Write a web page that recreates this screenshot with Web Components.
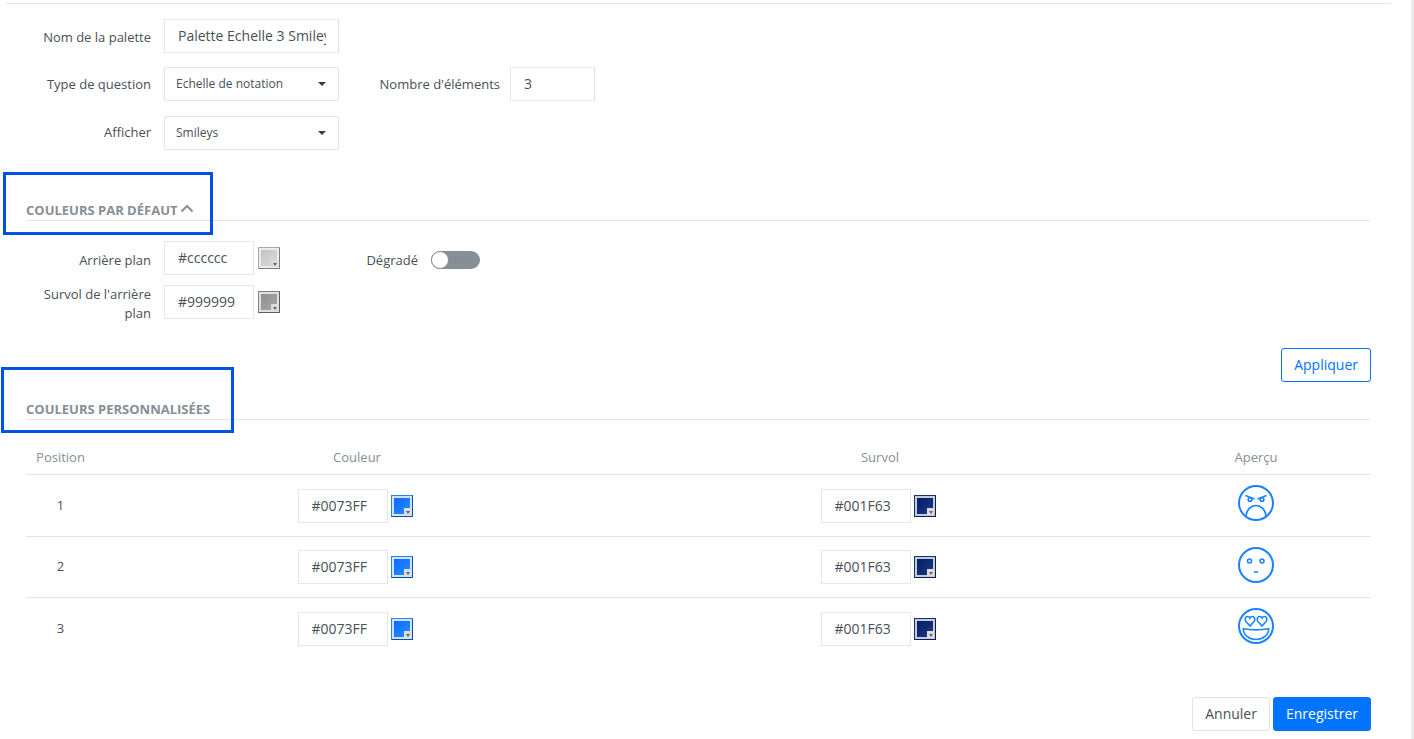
<!DOCTYPE html>
<html lang="fr">
<head>
<meta charset="utf-8">
<title>Palette</title>
<style>
  html, body { margin: 0; padding: 0; background: #fff; overflow: hidden; }
  body { font-family: "Open Sans", sans-serif; color: #495057; }
</style>
</head>
<body>
<palette-form></palette-form>

<script>
function define(name, css, html, init) {
    customElements.define(name, class extends HTMLElement {
        connectedCallback() {
            if (this.shadowRoot) return;
            this.attachShadow({ mode: 'open' });
            const a = (k, d) => this.getAttribute(k) ?? d;
            this.shadowRoot.innerHTML = `<style>${css}</style>${html(a)}`;
            if (init) init(this, a);
        }
    });
}

define('text-box', `
    :host { display: block; box-sizing: border-box; height: 34px; border: 1px solid #e6e6e6;
            background: #fff; font-size: 14px; line-height: 32px; color: #495057; }
    div { margin: 0 12px 0 13px; overflow: hidden; white-space: nowrap; }
`, a => `<div>${a('value', '')}</div>`, (el, a) => { el.style.width = a('width', '90') + 'px'; });

define('select-box', `
    :host { display: flex; align-items: center; justify-content: space-between; box-sizing: border-box;
            width: 175px; height: 34px; padding: 0 12px 0 11px; border: 1px solid #e3e3e3; border-radius: 2px;
            background: #fff; font-size: 12px; color: #495057; }
    span { position: relative; top: -1px; }
    i { width: 0; height: 0; border-left: 4px solid transparent; border-right: 4px solid transparent;
        border-top: 4px solid #343a40; }
`, a => `<span>${a('value', '')}</span><i></i>`);

define('color-swatch', `
    :host { display: block; position: relative; box-sizing: border-box; width: 22px; height: 22px;
            padding: 2px; border: 1px solid var(--edge); border-top-color: var(--edge-lt); border-left-color: var(--edge-lt);
            background: var(--band); }
    .fill { height: 100%; background: linear-gradient(135deg, var(--from), var(--to)); }
    .notch { position: absolute; right: 1px; bottom: 1px; width: 7px; height: 7px; background: #dcdcdc; }
    .notch::after { content: ""; position: absolute; left: 2px; top: 3px; border-left: 2px solid transparent;
            border-right: 2px solid transparent; border-top: 3px solid #666; }
`, () => `<div class="fill"></div><div class="notch"></div>`, (el, a) => {
    el.style.setProperty('--edge', a('edge', '#888'));
    el.style.setProperty('--edge-lt', a('edge-lt', a('edge', '#888')));
    el.style.setProperty('--band', a('band', '#fff'));
    el.style.setProperty('--from', a('from', '#ccc'));
    el.style.setProperty('--to', a('to', '#ccc'));
});

define('color-field', `
    :host { display: flex; align-items: center; gap: var(--swatch-gap, 3px); }
`, a => `<text-box value="${a('value', '')}" width="90"></text-box>
    <color-swatch edge="${a('edge', '#888')}" edge-lt="${a('edge-lt', a('edge', '#888'))}" band="${a('band', '#fff')}" from="${a('from', '#ccc')}" to="${a('to', '#ccc')}"></color-swatch>`);

define('toggle-switch', `
    :host { display: block; position: relative; top: 2px; width: 49px; height: 18px; border-radius: 9px; background: #868e96; }
    i { position: absolute; left: 0; top: 0; box-sizing: border-box; width: 18px; height: 18px; border-radius: 50%;
        background: #fff; border: 1px solid #868e96; }
`, () => `<i></i>`);

// right aligned label followed by its control
define('form-field', `
    :host { display: flex; align-items: center; gap: var(--gap, 13px); }
    label { display: block; box-sizing: border-box; position: relative; top: var(--ly, 0px); text-align: right;
            font-size: 13px; line-height: 19px; color: #495057; }
`, a => `<label style="width:${a('label-width', '125')}px">${a('label', '')}</label><slot></slot>`);

define('section-title', `
    :host { display: flex; align-items: flex-start; gap: 3px; height: 21px; box-sizing: border-box;
            border-bottom: 1px solid #e3e3e3; font-size: 13px; font-weight: 700; color: #868e96; }
    span { line-height: 20px; }
    svg { width: 14px; height: 9px; position: relative; top: 4px; }
`, a => `<span>${a('title-text', '')}</span>${a('open') !== undefined
    ? '<svg viewBox="0 0 14 9"><path d="M1.500 7.500 7 2l5.500 5.500" fill="none" stroke="#868e96" stroke-width="2"/></svg>' : ''}`);

const heart = x => `<path d="M${x} 18l-3.900-4.200c-1.900-2.200-.8-5.300 1.600-5.300 1 0 1.800.6 2.300 1.500.5-.9 1.300-1.500 2.300-1.500 2.400 0 3.500 3.100 1.600 5.300z"/>`;
const faces = {
    angry: `<path d="M7.500 10.500l9 3.500M28.500 10.500l-9 3.500"/><circle cx="12" cy="14.500" r="1.800"/><circle cx="24" cy="14.500" r="1.800"/>
            <path d="M8 31C8.500 24.500 13 20.500 18 20.500s9.500 4 10 10.500"/>`,
    neutral: `<circle cx="11.500" cy="14" r="2"/><circle cx="24" cy="14" r="2"/><path d="M16 25h4"/>`,
    love: `${heart(12)}${heart(24)}
           <path d="M5.300 20.700Q18 23 30.700 20.700C30.700 27 25 31.500 18 31.500S5.300 27 5.300 20.700z"/>`
};
define('smiley-face', `
    :host { display: block; width: 36px; height: 36px; }
    svg { display: block; width: 36px; height: 36px; fill: none; stroke: #1a82ff; stroke-width: 1.600; }
    circle:first-child { stroke-width: 2; }
`, a => `<svg viewBox="0 0 36 36"><circle cx="18" cy="18" r="17"/>${faces[a('kind', 'neutral')]}</svg>`);

define('action-button', `
    :host { display: block; box-sizing: border-box; height: 34px; padding: 0 12px; border-radius: 3px; border: 1px solid #e3e3e3;
            font-size: 14px; line-height: 32px; color: #495057; background: #fff; white-space: nowrap; }
    :host([kind="primary"]) { background: #0073ff; border-color: #0073ff; color: #fff; }
    :host([kind="outline"]) { border-color: #0073ff; color: #0073ff; }
`, () => `<slot></slot>`);

define('color-row', `
    :host { display: grid; grid-template-columns: 69px 524px 522px 230px; align-items: center; box-sizing: border-box;
            height: var(--row, 62px); border-bottom: 1px solid #e3e3e3; font-size: 13px; color: #495057; }
    :host([last]) { border-bottom: 0; }
    .c { display: flex; justify-content: center; }
    .pos { position: relative; top: -1px; }
    .face { position: relative; top: -3px; }
    .col2 { position: relative; left: -2px; }
`, a => `
    <div class="c pos">${a('position', '')}</div>
    <div class="c col2"><color-field value="#0073FF" edge="#0a4ea8" edge-lt="#2a85e8" band="#cfe3ff" from="#0a6cff" to="#2a8cff"></color-field></div>
    <div class="c col2"><color-field value="#001F63" edge="#0a1c50" edge-lt="#1b2f6a" band="#c4cbdd" from="#001f63" to="#1f3a86"></color-field></div>
    <div class="c face"><slot></slot></div>`);

// the blue frames drawn over the screenshot
define('mark-frame', `
    :host { display: block; position: absolute; box-sizing: border-box; border: 3px solid #0052e6; pointer-events: none; }
`, () => ``);

define('palette-form', `
    :host { display: block; position: relative; height: 739px; overflow: hidden; font-family: "Open Sans", sans-serif; }
    .scrollbar { position: absolute; right: 0; top: 0; bottom: 0; width: 3px; background: #ececec; }
    .wrap { padding: 3px 23px 0 0; }
    .top-rule { margin-left: 5px; width: 1386px; height: 1px; border-top: 1px solid #e3e3e3; }
    .row { display: flex; align-items: center; }
    .fields { padding-top: 14px; display: flex; flex-direction: column; }
    .content { margin-left: 26px; width: 1345px; }
    .heads { display: grid; grid-template-columns: 69px 524px 522px 230px; height: 55px; box-sizing: border-box;
             padding-bottom: 8px; align-items: end; border-bottom: 1px solid #e3e3e3; font-size: 13px; color: #868e96; text-align: center; }
    .actions { display: flex; justify-content: flex-end; gap: 3px; }
`, () => `
    <div class="scrollbar"></div>
    <div class="wrap">
      <div class="top-rule"></div>
      <div class="fields">
        <form-field label="Nom de la palette" label-width="151" style="--ly:1px"><text-box value="Palette Echelle 3 Smileys" width="175"></text-box></form-field>
        <div class="row" style="margin-top:14px">
          <form-field label="Type de question" label-width="151"><select-box value="Echelle de notation"></select-box></form-field>
          <form-field label="Nombre d'éléments" label-width="161" style="--gap:10px"><text-box value="3" width="85"></text-box></form-field>
        </div>
        <form-field label="Afficher" label-width="151" style="margin-top:15px;--ly:-1px"><select-box value="Smileys"></select-box></form-field>
      </div>

      <section-title class="content" title-text="COULEURS PAR DÉFAUT" open style="margin-top:50px"></section-title>
      <div class="row" style="margin-top:20px">
        <form-field label="Arrière plan" label-width="125" style="margin-left:26px;--ly:2px">
          <color-field value="#cccccc" edge="#7c7c7c" edge-lt="#a8a8a8" band="#ececec" from="#c4c4c4" to="#d8d8d8" style="--swatch-gap:4px"></color-field>
        </form-field>
        <form-field label="Dégradé" label-width="80" style="margin-left:58px;--ly:2px"><toggle-switch></toggle-switch></form-field>
      </div>
      <form-field label="Survol de l'arrière plan" label-width="125" style="margin:8px 0 0 26px;--ly:2px">
        <color-field value="#999999" edge="#5c5c5c" edge-lt="#808080" band="#e0e0e0" from="#8f8f8f" to="#a8a8a8" style="--swatch-gap:4px"></color-field>
      </form-field>

      <div class="actions content" style="margin-top:27px"><action-button kind="outline">Appliquer</action-button></div>

      <section-title class="content" title-text="COULEURS PERSONNALISÉES" style="margin-top:17px"></section-title>
      <div class="content">
        <div class="heads"><div>Position</div><div>Couleur</div><div>Survol</div><div>Aperçu</div></div>
        <color-row position="1"><smiley-face kind="angry"></smiley-face></color-row>
        <color-row position="2" style="--row:61px"><smiley-face kind="neutral" style="margin-top:2px"></smiley-face></color-row>
        <color-row position="3" last><smiley-face kind="love"></smiley-face></color-row>
      </div>

      <div class="actions content" style="margin-top:37px">
        <action-button>Annuler</action-button>
        <action-button kind="primary">Enregistrer</action-button>
      </div>
    </div>
    <mark-frame style="left:3px;top:172px;width:210px;height:63px"></mark-frame>
    <mark-frame style="left:1px;top:367px;width:233px;height:66px"></mark-frame>
`);
</script>
</body>
</html>
